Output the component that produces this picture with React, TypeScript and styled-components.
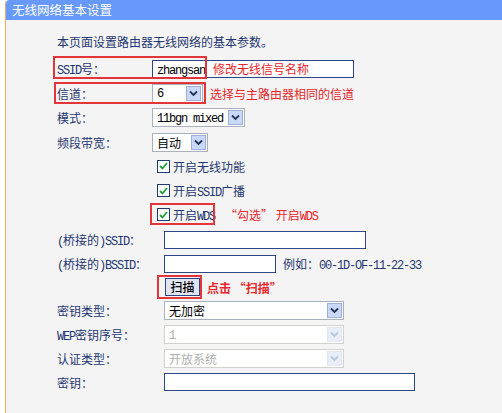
import * as React from 'react';
import styled, { createGlobalStyle } from 'styled-components';

const GlobalStyle = createGlobalStyle`
  html, body {
    margin: 0;
    padding: 0;
    background: #fff;
  }
  body {
    font-family: 'Noto Sans CJK SC', 'Noto Sans', sans-serif;
    font-size: 12px;
  }
`;

// half-width latin runs, like the bitmap font of the original page
const L = styled.span`
  font-family: 'Liberation Mono', 'DejaVu Sans Mono', monospace;
  font-size: 12px;
  letter-spacing: -1.2px;
`;

const Panel = styled.div`
  margin-left: 5px;
  height: 413px;
  border-left: 1px solid #f1aa62;
  border-top-left-radius: 4px;
  background: #f4f4f4;
  overflow: hidden;
`;

const Header = styled.div`
  height: 20px;
  line-height: 20px;
  padding-left: 6px;
  background: #6799fb;
  color: #fff;
  font-size: 12.5px;
  border-top-left-radius: 3px;
`;

const Body = styled.div`
  position: relative;
  padding-left: 51px;
`;

const Intro = styled.div`
  padding-top: 10px;
  height: 24px;
  line-height: 24px;
  margin-bottom: 3px;
  color: #1f3670;
`;

const Form = styled.div<{ labelWidth: number; rowHeight: number }>`
  display: grid;
  grid-template-columns: ${p => p.labelWidth}px 1fr;
  grid-auto-rows: ${p => p.rowHeight}px;
  align-items: center;
`;

const BottomForm = styled(Form)`
  margin-top: 1px;
`;

const Label = styled.div`
  color: #1f3670;
  white-space: nowrap;
`;

const Field = styled.div<{ indent?: number }>`
  display: flex;
  align-items: center;
  padding-left: ${p => p.indent || 0}px;
  white-space: nowrap;
`;

const TextInput = styled.div<{ width: number }>`
  box-sizing: border-box;
  width: ${p => p.width}px;
  height: 18px;
  line-height: 16px;
  padding-left: 4px;
  border: 1px solid #2e4686;
  background: #fff;
  color: #000;
`;

const SelectBox = styled.div<{ width: number; disabled?: boolean }>`
  box-sizing: border-box;
  display: flex;
  align-items: center;
  width: ${p => p.width}px;
  height: 19px;
  padding: 1px;
  border: 1px solid ${p => (p.disabled ? '#d2d2cc' : '#a9b1bf')};
  background: #fff;
  color: ${p => (p.disabled ? '#b0b0b0' : '#000')};
`;

const SelectText = styled.span`
  flex: 1;
  padding-left: 3px;
  line-height: 15px;
`;

const ArrowButton = styled.span<{ disabled?: boolean }>`
  box-sizing: border-box;
  width: 15px;
  height: 15px;
  display: flex;
  align-items: center;
  justify-content: center;
  border: 1px solid ${p => (p.disabled ? '#dfe6f2' : '#9db0d6')};
  background: ${p => (p.disabled ? '#e8eef8' : '#c9d8f7')};
`;

const Check = styled.span`
  box-sizing: border-box;
  width: 13px;
  height: 13px;
  margin-right: 3px;
  display: flex;
  align-items: center;
  justify-content: center;
  border: 1px solid #1d3b78;
  background: #fff;
`;

const CheckText = styled.span`
  color: #1f3670;
`;

const Hint = styled.span<{ gap: number; bold?: boolean }>`
  margin-left: ${p => p.gap}px;
  color: #e8262b;
  font-weight: ${p => (p.bold ? 700 : 400)};
`;

const Example = styled.span`
  margin-left: 7px;
  color: #1f3670;
`;

const ScanButton = styled.div`
  box-sizing: border-box;
  width: 35px;
  height: 18px;
  margin-left: 1px;
  line-height: 16px;
  text-align: center;
  border: 1px solid #2e4686;
  background: #dfe5f1;
  color: #000;
  font-weight: 500;
`;

const Mark = styled.div<{ left: number; top: number; w: number; h: number }>`
  position: absolute;
  box-sizing: border-box;
  left: ${p => p.left}px;
  top: ${p => p.top}px;
  width: ${p => p.w}px;
  height: ${p => p.h}px;
  border: 2px solid #e2363a;
  pointer-events: none;
`;

const OverHint = styled.div`
  position: absolute;
  left: 207px;
  top: 41px;
  line-height: 16px;
  color: #e8262b;
`;

const Chevron: React.FC<{ disabled?: boolean }> = ({ disabled }) => (
  <svg width="9" height="7" viewBox="0 0 9 7">
    <polyline
      points="1,1.5 4.5,5 8,1.5"
      fill="none"
      stroke={disabled ? '#b9c6dc' : '#233455'}
      strokeWidth="1.8"
    />
  </svg>
);

const Select: React.FC<{ width: number; value: React.ReactNode; disabled?: boolean }> = ({
  width,
  value,
  disabled
}) => (
  <SelectBox width={width} disabled={disabled}>
    <SelectText>{value}</SelectText>
    <ArrowButton disabled={disabled}>
      <Chevron disabled={disabled} />
    </ArrowButton>
  </SelectBox>
);

const Checkbox: React.FC<{ children: React.ReactNode }> = ({ children }) => (
  <>
    <Check>
      <svg width="9" height="8" viewBox="0 0 9 8">
        <polyline points="1,4 3.5,6.5 8,1" fill="none" stroke="#22a03a" strokeWidth="1.8" />
      </svg>
    </Check>
    <CheckText>{children}</CheckText>
  </>
);

export default function App() {
  return (
    <>
      <GlobalStyle />
      <Panel>
        <Header>无线网络基本设置</Header>
        <Body>
          <Intro>本页面设置路由器无线网络的基本参数。</Intro>

          <Form labelWidth={95} rowHeight={24.3}>
            <Label>
              <L>SSID</L>号：
            </Label>
            <Field>
              <TextInput width={202}>
                <L>zhangsan</L>
              </TextInput>
            </Field>

            <Label>信道：</Label>
            <Field>
              <Select width={51} value={<L>6</L>} />
              <Hint gap={7}>选择与主路由器相同的信道</Hint>
            </Field>

            <Label>模式：</Label>
            <Field>
              <Select width={93} value={<L>11bgn mixed</L>} />
            </Field>

            <Label>频段带宽：</Label>
            <Field>
              <Select width={56} value="自动" />
            </Field>

            <Label />
            <Field indent={5}>
              <Checkbox>开启无线功能</Checkbox>
            </Field>

            <Label />
            <Field indent={5}>
              <Checkbox>
                开启<L>SSID</L>广播
              </Checkbox>
            </Field>

            <Label />
            <Field indent={5}>
              <Checkbox>
                开启<L>WDS</L>
              </Checkbox>
              <Hint gap={10}>
                “勾选” 开启<L>WDS</L>
              </Hint>
            </Field>
          </Form>

          <BottomForm labelWidth={107} rowHeight={23.7}>
            <Label>
              <L>(</L>桥接的<L>)SSID</L>：
            </Label>
            <Field>
              <TextInput width={202} />
            </Field>

            <Label>
              <L>(</L>桥接的<L>)BSSID</L>：
            </Label>
            <Field>
              <TextInput width={112} />
              <Example>
                例如：<L>00-1D-OF-11-22-33</L>
              </Example>
            </Field>

            <Label />
            <Field>
              <ScanButton>扫描</ScanButton>
              <Hint gap={7} bold>
                点击 “扫描”
              </Hint>
            </Field>

            <Label>密钥类型：</Label>
            <Field>
              <Select width={180} value="无加密" />
            </Field>

            <Label>
              <L>WEP</L>密钥序号：
            </Label>
            <Field>
              <Select width={180} value={<L>1</L>} disabled />
            </Field>

            <Label>认证类型：</Label>
            <Field>
              <Select width={180} value="开放系统" disabled />
            </Field>

            <Label>密钥：</Label>
            <Field>
              <TextInput width={251} />
            </Field>
          </BottomForm>

          <OverHint>修改无线信号名称</OverHint>
          <Mark left={47} top={36} w={154} h={23} />
          <Mark left={48} top={62} w={152} h={22} />
          <Mark left={144} top={183} w={65} h={22} />
          <Mark left={151} top={255} w={45} h={24} />
        </Body>
      </Panel>
    </>
  );
}
